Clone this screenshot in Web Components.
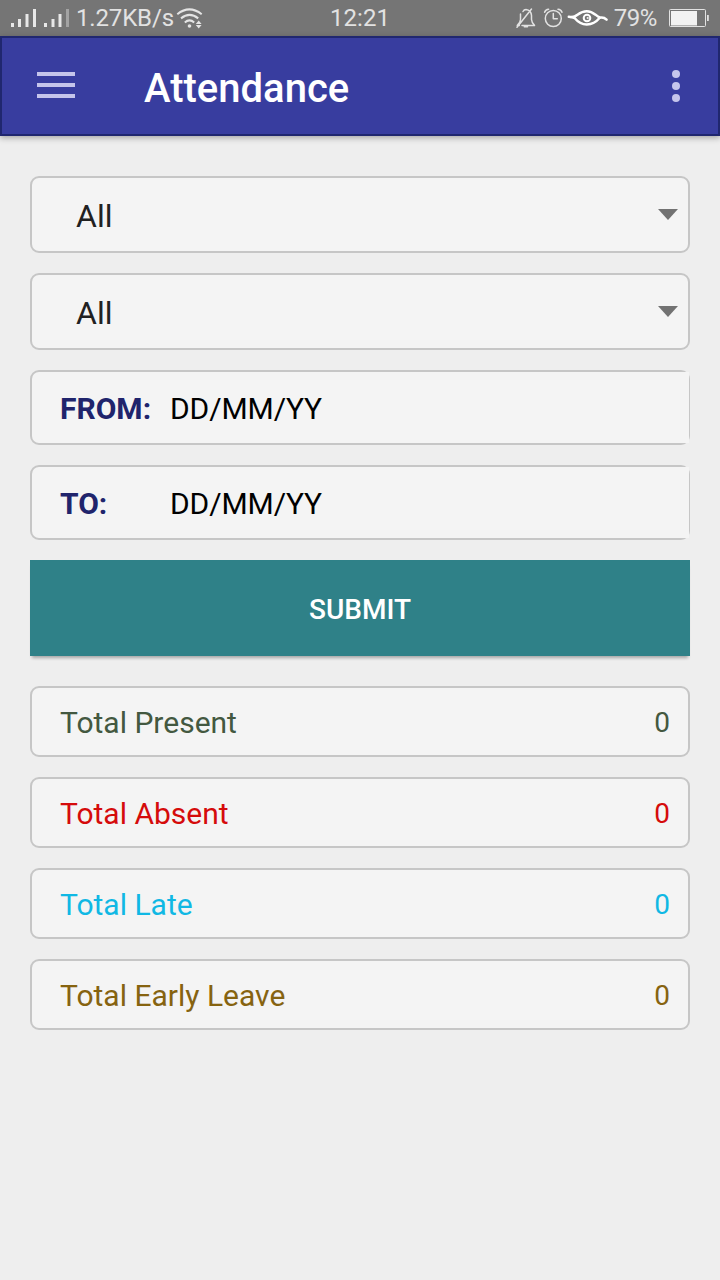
<!DOCTYPE html>
<html lang="en">
<head>
<meta charset="utf-8">
<meta name="viewport" content="width=device-width, initial-scale=1">
<title>Attendance</title>
<style>
    body {
        margin: 0;
        min-height: 100vh;
        background: #eeeeee;
        font-family: Roboto, "Liberation Sans", sans-serif;
        --line: #c6c6c6;
        --surface: #f4f4f4;
    }
    main {
        display: flex;
        flex-direction: column;
        gap: 20px;
        padding: 40px 30px;
    }
    submit-button {
        margin-bottom: 10px;
    }
</style>
</head>
<body>
    <status-bar speed="1.27KB/s" time="12:21" battery="79%"></status-bar>
    <app-bar>Attendance</app-bar>
    <main>
        <select-field>All</select-field>
        <select-field>All</select-field>
        <date-field label="FROM:">DD/MM/YY</date-field>
        <date-field label="TO:">DD/MM/YY</date-field>
        <submit-button>SUBMIT</submit-button>
        <total-card style="color: #435840">Total Present<span slot="count">0</span></total-card>
        <total-card style="color: #d50b0b">Total Absent<span slot="count">0</span></total-card>
        <total-card style="color: #10b8e4">Total Late<span slot="count">0</span></total-card>
        <total-card style="color: #866310">Total Early Leave<span slot="count">0</span></total-card>
    </main>

<script>
class StatusBar extends HTMLElement {
    constructor() {
        super();
        const shadow = this.attachShadow({ mode: 'open' });
        shadow.innerHTML = `
            <style>
                :host {
                    display: grid;
                    grid-template-columns: 1fr auto 1fr;
                    height: 36px;
                    background: #757575;
                    color: #e2e2e2;
                    font-size: 24px;
                    line-height: 36px;
                    white-space: nowrap;
                }
                div {
                    display: flex;
                }
                .right {
                    justify-content: flex-end;
                }
                .speed {
                    letter-spacing: -0.15px;
                }
                .battery {
                    letter-spacing: -0.4px;
                }
                svg {
                    display: block;
                    flex: none;
                }
            </style>
            <div class="left">
                <svg width="76" height="36" viewBox="0 0 76 36" fill="#e8e8e8">
                    <path d="M11 23h3v4h-3zM18 19h3v8h-3zM25.5 14h3v13h-3zM33 9h3v18h-3z"/>
                    <path d="M44 23h3v4h-3zM51.5 19h3v8h-3zM58.5 14h3v13h-3z"/>
                    <path d="M66 9h3v18h-3z" opacity=".4"/>
                </svg>
                <span class="speed"></span>
                <svg width="30" height="36" viewBox="174 0 30 36" fill="none" stroke="#e4e4e4" stroke-width="2">
                    <path d="M177.3 14.2q12-9.6 24.4 0M181 18.4q8.6-7 17.2 0M184.8 22.4q4.7-4 9.4 0"/>
                    <circle cx="189.5" cy="26" r="1.8" fill="#e4e4e4" stroke="none"/>
                    <path d="M198.7 20.4l2.9 3.5h-5.8zM198.7 28.400l2.900-3.500h-5.800z" fill="#e4e4e4" stroke="none"/>
                </svg>
            </div>
            <span class="time"></span>
            <div class="right">
                <svg width="102" height="36" viewBox="512 0 102 36" fill="none" stroke="#e2e2e2" stroke-width="1.5" stroke-linecap="round" stroke-linejoin="round">
                    <!-- muted bell -->
                    <path d="M523 11.5q1-2 3-2 5 .5 5.5 6v4q.3 3.5 3 5.900H522M520.500 14v5.500q-.3 3.500-3.200 5.900h2M517 27.300L531.500 9M524.300 26.800h3.200"/>
                    <!-- alarm clock -->
                    <circle cx="553.300" cy="18.500" r="8"/>
                    <path d="M553.300 13.500v5.200h4M544.600 12.300q1-2.700 4-3M562 12.300q-1-2.700-4-3"/>
                    <!-- eye comfort mode -->
                    <g stroke="#ffffff">
                        <path d="M568.800 16.800q4 .2 6 1.500 5 6 12 6.300 7.500-.3 13-6.800 4-.8 6.800 1.900M571 17.300q4-.4 6.500-2.600 9.500-7 18 0 2.500 2.300 5 2.900" stroke-width="2.500"/>
                        <circle cx="587" cy="18" r="3.300" stroke-width="2"/>
                        <circle cx="587.500" cy="18" r=".6" stroke-width="1"/>
                    </g>
                </svg>
                <span class="battery"></span>
                <svg width="63" height="36" viewBox="657 0 63 36">
                    <rect x="669.500" y="9.500" width="36" height="17" rx="1" fill="none" stroke="#e2e2e2"/>
                    <path d="M671 11h26v14.500h-26z" fill="#f2f2f2"/>
                    <path d="M707 15h1.800v6H707z" fill="#e2e2e2"/>
                </svg>
            </div>
        `;
        for (const name of ['speed', 'time', 'battery']) {
            shadow.querySelector('.' + name).textContent = this.getAttribute(name);
        }
    }
}

class AppBar extends HTMLElement {
    constructor() {
        super();
        const shadow = this.attachShadow({ mode: 'open' });
        shadow.innerHTML = `
            <style>
                :host {
                    display: flex;
                    align-items: center;
                    box-sizing: border-box;
                    height: 100px;
                    padding: 0 38px 0 35px;
                    background: #383d9f;
                    border: 2px solid #20276f;
                    box-shadow: 0 2px 6px rgba(0, 0, 0, 0.3);
                    color: #ffffff;
                }
                h1 {
                    flex: 1;
                    margin: 6px 0 0 69px;
                    font-size: 40px;
                    font-weight: 500;
                    line-height: 48px;
                }
                svg {
                    display: block;
                    fill: #c5c5ec;
                }
            </style>
            <svg width="38" height="28" viewBox="0 0 38 28"><path d="M0 0h38v4H0zM0 11h38v4H0zM0 22h38v4H0z"/></svg>
            <h1><slot></slot></h1>
            <svg width="8" height="32" viewBox="0 0 8 32"><circle cx="4" cy="4" r="4"/><circle cx="4" cy="16" r="4"/><circle cx="4" cy="28" r="4"/></svg>
        `;
    }
}

class SelectField extends HTMLElement {
    constructor() {
        super();
        const shadow = this.attachShadow({ mode: 'open' });
        shadow.innerHTML = `
            <style>
                :host {
                    display: flex;
                    align-items: center;
                    justify-content: space-between;
                    box-sizing: border-box;
                    height: 77px;
                    padding: 0 10px 0 44px;
                    background: var(--surface);
                    border: 2px solid var(--line);
                    border-radius: 9px;
                    color: #212121;
                    font-size: 32px;
                    line-height: 40px;
                }
                span {
                    padding-top: 2px;
                }
                i {
                    border: 10px solid transparent;
                    border-top: 11px solid #727272;
                    border-bottom: 0;
                }
            </style>
            <span><slot></slot></span>
            <i></i>
        `;
    }
}

class DateField extends HTMLElement {
    constructor() {
        super();
        const shadow = this.attachShadow({ mode: 'open' });
        shadow.innerHTML = `
            <style>
                :host {
                    display: flex;
                    box-sizing: border-box;
                    height: 75px;
                    padding-left: 28px;
                    background: var(--surface);
                    border: 2px solid var(--line);
                    border-radius: 9px;
                    color: #000000;
                    font-size: 30px;
                    line-height: 74px;
                }
                b {
                    width: 110px;
                    color: #20246c;
                    font-weight: 700;
                }
                /* square box runs over the rounded right corners */
                span {
                    flex: 1;
                    height: 71px;
                    margin-right: -0.5px;
                    background: var(--surface);
                    letter-spacing: -0.1px;
                }
            </style>
            <b></b>
            <span><slot></slot></span>
        `;
        shadow.querySelector('b').textContent = this.getAttribute('label');
    }
}

class SubmitButton extends HTMLElement {
    constructor() {
        super();
        const shadow = this.attachShadow({ mode: 'open' });
        shadow.innerHTML = `
            <style>
                :host {
                    display: block;
                }
                button {
                    display: block;
                    width: 100%;
                    height: 96px;
                    padding: 4px 0 0;
                    border: 0;
                    background: #2f8188;
                    box-shadow: 0 4px 3px -2px rgba(0, 0, 0, 0.3);
                    color: #ffffff;
                    font: 500 28px/36px Roboto, "Liberation Sans", sans-serif;
                }
            </style>
            <button><slot></slot></button>
        `;
    }
}

class TotalCard extends HTMLElement {
    constructor() {
        super();
        const shadow = this.attachShadow({ mode: 'open' });
        shadow.innerHTML = `
            <style>
                :host {
                    display: flex;
                    justify-content: space-between;
                    box-sizing: border-box;
                    height: 71px;
                    padding: 0 18px 0 28px;
                    background: var(--surface);
                    border: 2px solid var(--line);
                    border-radius: 9px;
                    font-size: 30px;
                    line-height: 69px;
                }
                .count {
                    font-size: 28px;
                }
            </style>
            <span><slot></slot></span>
            <span class="count"><slot name="count"></slot></span>
        `;
    }
}

customElements.define('status-bar', StatusBar);
customElements.define('app-bar', AppBar);
customElements.define('select-field', SelectField);
customElements.define('date-field', DateField);
customElements.define('submit-button', SubmitButton);
customElements.define('total-card', TotalCard);
</script>
</body>
</html>
